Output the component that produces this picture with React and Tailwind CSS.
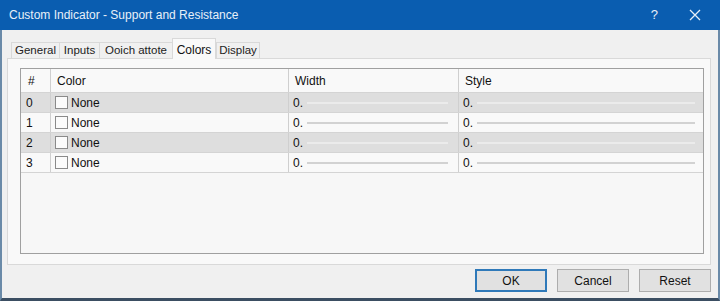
import React from "react";

const font = { fontFamily: '"Liberation Sans", Arial, sans-serif' };

function Tab({ label, w, selected, last }) {
  if (selected) {
    return (
      <div
        className={`${w} h-[21px] -mb-px relative z-10 flex items-start justify-center pt-[2px] bg-[#f9f9f9] border border-b-0 border-[#d9d9d9] text-[12px] text-[#111]`}
      >
        {label}
      </div>
    );
  }
  return (
    <div
      className={`${w} h-[16px] flex items-center justify-center bg-[#f0f0f0] border border-b-0 ${
        last ? "" : "border-r-0"
      } border-[#d9d9d9] text-[11.5px] text-[#222]`}
    >
      {label}
    </div>
  );
}

function Row({ n, gray }) {
  const bg = gray ? "bg-[#dedede]" : "bg-[#f9f9f9]";
  const line = gray ? "bg-[#ebebeb]" : "bg-[#d2d2d2]";
  return (
    <div className={`flex h-[20px] ${bg} border-b border-[#d4d4d4] text-[12px] text-[#111]`}>
      <div className="w-[30px] pl-[5px] flex items-center border-r border-[#cfcfcf]">{n}</div>
      <div className="w-[238px] pl-[4px] flex items-center gap-[3px] border-r border-[#cfcfcf]">
        <div className="w-[13px] h-[13px] border border-[#8a8a8a] bg-[#fbfbfb]" />
        <span>None</span>
      </div>
      <div className="w-[170px] pl-[4px] pr-[10px] flex items-center border-r border-[#cfcfcf]">
        <span>0.</span>
        <div className={`flex-1 ml-[4px] h-[2px] ${line}`} />
      </div>
      <div className="flex-1 pl-[4px] pr-[8px] flex items-center">
        <span>0.</span>
        <div className={`flex-1 ml-[4px] h-[2px] ${line}`} />
      </div>
    </div>
  );
}

function Btn({ label, primary }) {
  return (
    <div
      className={`w-[72px] h-[23px] flex items-center justify-center text-[12px] text-[#111] bg-[#e1e1e1] ${
        primary ? "border-2 border-[#2f79b9]" : "border border-[#adadad]"
      }`}
    >
      {label}
    </div>
  );
}

export default function App() {
  return (
    <div className="w-[720px] h-[301px] overflow-hidden bg-[#f0f0f0] flex flex-col" style={font}>
      <div className="h-[30px] bg-[#0a5db0] flex items-center pl-[9px] pr-[16px] text-[#e8f0f8]">
        <span className="text-[12px]">Custom Indicator - Support and Resistance</span>
        <span className="ml-auto text-[13px] mr-[31px]">?</span>
        <svg width="12" height="12" viewBox="0 0 12 12" className="mr-[3px]">
          <path d="M1 1 L11 11 M11 1 L1 11" stroke="#e8f0f8" strokeWidth="1.3" />
        </svg>
      </div>
      <div className="h-[271px] flex flex-col bg-[#f0f0f0] border-l-2 border-r-2 border-b-[3px] border-l-[#6a8aa8] border-r-[#6a8aa8] border-b-[#3b4e62]">
        <div className="h-[28px] pt-[8px] pl-[9px] flex items-end">
          <Tab label="General" w="w-[48px]" />
          <Tab label="Inputs" w="w-[40px]" />
          <Tab label="Ooich attote" w="w-[73px]" />
          <Tab label="Colors" w="w-[44px]" selected />
          <Tab label="Display" w="w-[44px]" last />
        </div>
        <div className="h-[207px] ml-[5px] mr-[7px] border border-[#d9d9d9] bg-[#f9f9f9] pt-[9px] pl-[12px] pr-[6px]">
          <div className="h-[186px] border border-[#a0a0a0] bg-[#f7f7f7] flex flex-col">
            <div className="flex h-[24px] bg-[#f9f9f9] border-b border-[#d4d4d4] text-[12px] text-[#111]">
              <div className="w-[30px] pl-[7px] flex items-center border-r border-[#cfcfcf]">#</div>
              <div className="w-[238px] pl-[6px] flex items-center border-r border-[#cfcfcf]">Color</div>
              <div className="w-[170px] pl-[6px] flex items-center border-r border-[#cfcfcf]">Width</div>
              <div className="flex-1 pl-[6px] flex items-center">Style</div>
            </div>
            <Row n="0" gray />
            <Row n="1" />
            <Row n="2" gray />
            <Row n="3" />
          </div>
        </div>
        <div className="mt-[4px] flex justify-end gap-[10px] pr-[7px]">
          <Btn label="OK" primary />
          <Btn label="Cancel" />
          <Btn label="Reset" />
        </div>
      </div>
    </div>
  );
}
